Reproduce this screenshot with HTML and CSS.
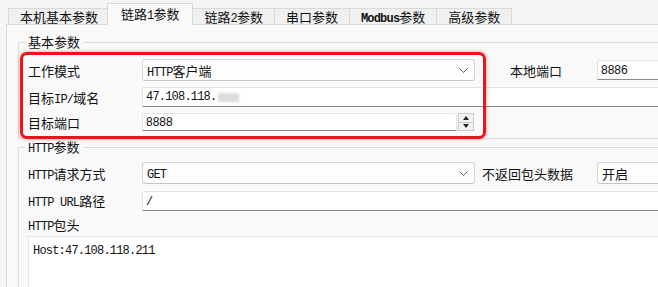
FILE: index.html
```html
<!DOCTYPE html>
<html lang="zh-CN">
<head>
    <meta charset="UTF-8">
    <title>链路1参数</title>
    <link rel="stylesheet" href="styles.css">
</head>
<body>
    <div class="window">
        <div class="tabs">
            <div class="tab">本机基本参数</div>
            <div class="tab active">链路<span class="m">1</span>参数</div>
            <div class="tab">链路<span class="m">2</span>参数</div>
            <div class="tab">串口参数</div>
            <div class="tab"><span class="m b">Modbus</span>参数</div>
            <div class="tab">高级参数</div>
        </div>

        <div class="page">
            <fieldset class="group first">
                <legend>基本参数</legend>
                <div class="fields">
                    <div class="row r1">
                        <div class="label">工作模式</div>
                        <div class="select wide">
                            <span><span class="m">HTTP</span>客户端</span>
                            <svg class="chev" viewBox="0 0 9 5"><polyline points="0.5,0.5 4.5,4.5 8.5,0.5"/></svg>
                        </div>
                        <div class="label side">本地端口</div>
                        <div class="text num">8886</div>
                    </div>
                    <div class="row r2">
                        <div class="label">目标<span class="m">IP/</span>域名</div>
                        <div class="text"><span class="m">47.108.118.</span><span class="blur"></span></div>
                    </div>
                    <div class="row r3">
                        <div class="label">目标端口</div>
                        <div class="spin">
                            <div class="text num">8888</div>
                            <div class="spin-btn">
                                <span class="up"></span>
                                <span class="down"></span>
                            </div>
                        </div>
                    </div>
                </div>
            </fieldset>

            <fieldset class="group second">
                <legend><span class="m">HTTP</span>参数</legend>
                <div class="fields">
                    <div class="row r1">
                        <div class="label"><span class="m">HTTP</span>请求方式</div>
                        <div class="select wide">
                            <span class="m solo">GET</span>
                            <svg class="chev" viewBox="0 0 9 5"><polyline points="0.5,0.5 4.5,4.5 8.5,0.5"/></svg>
                        </div>
                        <div class="label side2">不返回包头数据</div>
                        <div class="select fill"><span>开启</span></div>
                    </div>
                    <div class="row r2">
                        <div class="label"><span class="m">HTTP URL</span>路径</div>
                        <div class="text"><span class="m solo">/</span></div>
                    </div>
                    <div class="row r4">
                        <div class="label"><span class="m">HTTP</span>包头</div>
                    </div>
                    <div class="memo"><span class="m">Host:47.108.118.211</span></div>
                </div>
            </fieldset>
        </div>

        <div class="mark"></div>
    </div>
</body>
</html>
```

FILE: styles.css
```css
* {
    margin: 0;
    padding: 0;
    box-sizing: border-box;
}

body {
    font-family: "Noto Sans CJK SC", sans-serif;
    font-size: 13px;
    color: #111;
    background-color: #f5f5f5;
}

.window {
    position: relative;
    width: 658px;
    height: 287px;
    overflow: hidden;
}

.m {
    font-family: "Liberation Mono", "Noto Sans CJK SC", monospace;
    font-size: 12px;
    letter-spacing: -0.8px;
    line-height: 1;
}

.m.solo {
    padding-top: 3px;
}

.b {
    font-weight: bold;
}

.num {
    font-family: "Liberation Sans", sans-serif;
    font-size: 12px;
}

/* tab strip */

.tabs {
    display: flex;
    align-items: flex-end;
    height: 24px;
    padding-left: 8px;
    position: relative;
    z-index: 1;
}

.tab {
    height: 16px;
    line-height: 15px;
    padding: 0 11px;
    border: 1px solid #d9d9d9;
    border-bottom: none;
    margin-right: -1px;
    background-color: #f0f0f0;
}

.tab.active {
    height: 22px;
    line-height: 19px;
    margin: 0 -1px -1px -2px;
    padding: 0 13px;
    background-color: #f9f9f9;
    position: relative;
    z-index: 2;
}

.page {
    margin-left: 6px;
    height: 263px;
    padding-left: 11px;
    border-top: 1px solid #d9d9d9;
    border-left: 1px solid #d9d9d9;
    background-color: #f9f9f9;
}

/* group boxes */

.group {
    width: 700px;
    border: 1px solid #dcdcdc;
    padding: 9px 0 7px 9px;
}

.group.first {
    margin-top: 9px;
}

.group.second {
    padding-top: 7px;
    height: 200px;
}

legend {
    margin-left: -3px;
    padding: 0 3px;
    height: 16px;
    line-height: 16px;
}

.fields {
    display: flex;
    flex-direction: column;
    gap: 6px;
}

.row {
    display: flex;
    align-items: center;
}

.first .r1 { height: 22px; }
.first .r2 { height: 20px; }
.first .r3 { height: 18px; }

.second .fields { gap: 0; }
.second .r1 { height: 22px; }
.second .r2 { height: 19px; margin-top: 7px; }
.second .r4 { height: 16px; margin-top: 6px; }

.label {
    width: 114px;
    flex: none;
    white-space: nowrap;
}

.label.side {
    width: 87px;
    margin-left: 35px;
}

.label.side2 {
    width: 115px;
    margin-left: 7px;
}

/* controls */

.select {
    height: 22px;
    display: flex;
    align-items: center;
    justify-content: space-between;
    padding: 0 6px 0 4px;
    background-color: #fdfdfd;
    border: 1px solid #d6d6d6;
    border-bottom-color: #c4c4c4;
    border-radius: 3px;
}

.select.wide {
    width: 333px;
}

.select.fill {
    flex: 1;
}

.chev {
    width: 9px;
    height: 5px;
    fill: none;
    stroke: #606060;
    stroke-width: 1;
}

.text {
    flex: 1;
    height: 20px;
    display: flex;
    align-items: center;
    padding-left: 3px;
    background-color: #fff;
    border: 1px solid #e4e4e4;
    border-bottom-color: #8a8a8a;
    border-radius: 3px 3px 0 0;
}

.blur {
    display: inline-block;
    width: 21px;
    height: 9px;
    margin-left: 2px;
    background-color: #dcdcdc;
    filter: blur(1px);
}

.spin {
    width: 333px;
    height: 18px;
    display: flex;
}

.spin .text {
    height: 18px;
}

.spin-btn {
    width: 16px;
    margin-left: 1px;
    margin-right: 1px;
    display: flex;
    flex-direction: column;
    border: 1px solid #c8c8c8;
    background-color: #f3f3f3;
}

.spin-btn span {
    flex: 1;
    display: flex;
    align-items: center;
    justify-content: center;
}

.spin-btn .up {
    border-bottom: 1px solid #c8c8c8;
}

.spin-btn .up::before {
    content: "";
    border-left: 3px solid transparent;
    border-right: 3px solid transparent;
    border-bottom: 4px solid #222;
}

.spin-btn .down::before {
    content: "";
    border-left: 3px solid transparent;
    border-right: 3px solid transparent;
    border-top: 4px solid #222;
}

.memo {
    margin-top: 4px;
    height: 80px;
    padding: 5px 4px;
    line-height: 14px;
    background-color: #fff;
    border: 1px solid #e4e4e4;
    border-right: none;
}

/* red highlight drawn over the basic group */

.mark {
    position: absolute;
    left: 20px;
    top: 52px;
    width: 466px;
    height: 87px;
    border: 3px solid #e8151c;
    border-radius: 7px;
    box-shadow: 0 0 3px 1px rgba(232, 21, 28, 0.3);
    pointer-events: none;
}
```
